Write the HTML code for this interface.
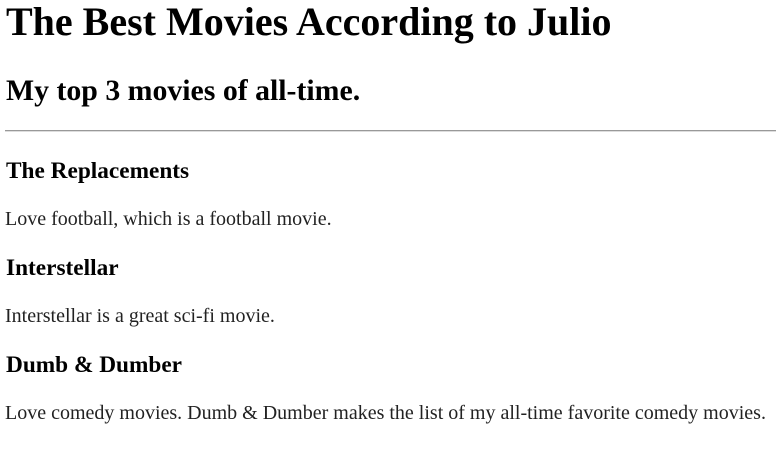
<!DOCTYPE html>
<html><head><style>
body{margin:0;width:776px;height:457px;font-family:"Liberation Serif",serif;color:#000;background:#fff;position:relative;overflow:hidden}
.a{position:absolute;left:6px;margin:0;white-space:nowrap}
h1{font-size:40px;line-height:46px;font-weight:bold}
h2{font-size:29.8px;line-height:34px;font-weight:bold}
h3{font-size:23.3px;line-height:28px;font-weight:bold}
p{font-size:20px;line-height:24px;color:#222}
.hr{position:absolute;left:5px;right:0;top:130px;height:0;border-top:1px solid #999;border-bottom:1px solid #ddd}
</style></head><body>
<h1 class="a" style="top:-1px">The Best Movies According to Julio</h1>
<h2 class="a" style="top:74px">My top 3 movies of all-time.</h2>
<div class="hr"></div>
<h3 class="a" style="top:157px">The Replacements</h3>
<p class="a" style="top:207px;left:5px">Love football, which is a football movie.</p>
<h3 class="a" style="top:254px">Interstellar</h3>
<p class="a" style="top:304px;left:5px">Interstellar is a great sci-fi movie.</p>
<h3 class="a" style="top:351px">Dumb &amp; Dumber</h3>
<p class="a" style="top:401px;left:5px">Love comedy movies. Dumb &amp; Dumber makes the list of my all-time favorite comedy movies.</p>
</body></html>
